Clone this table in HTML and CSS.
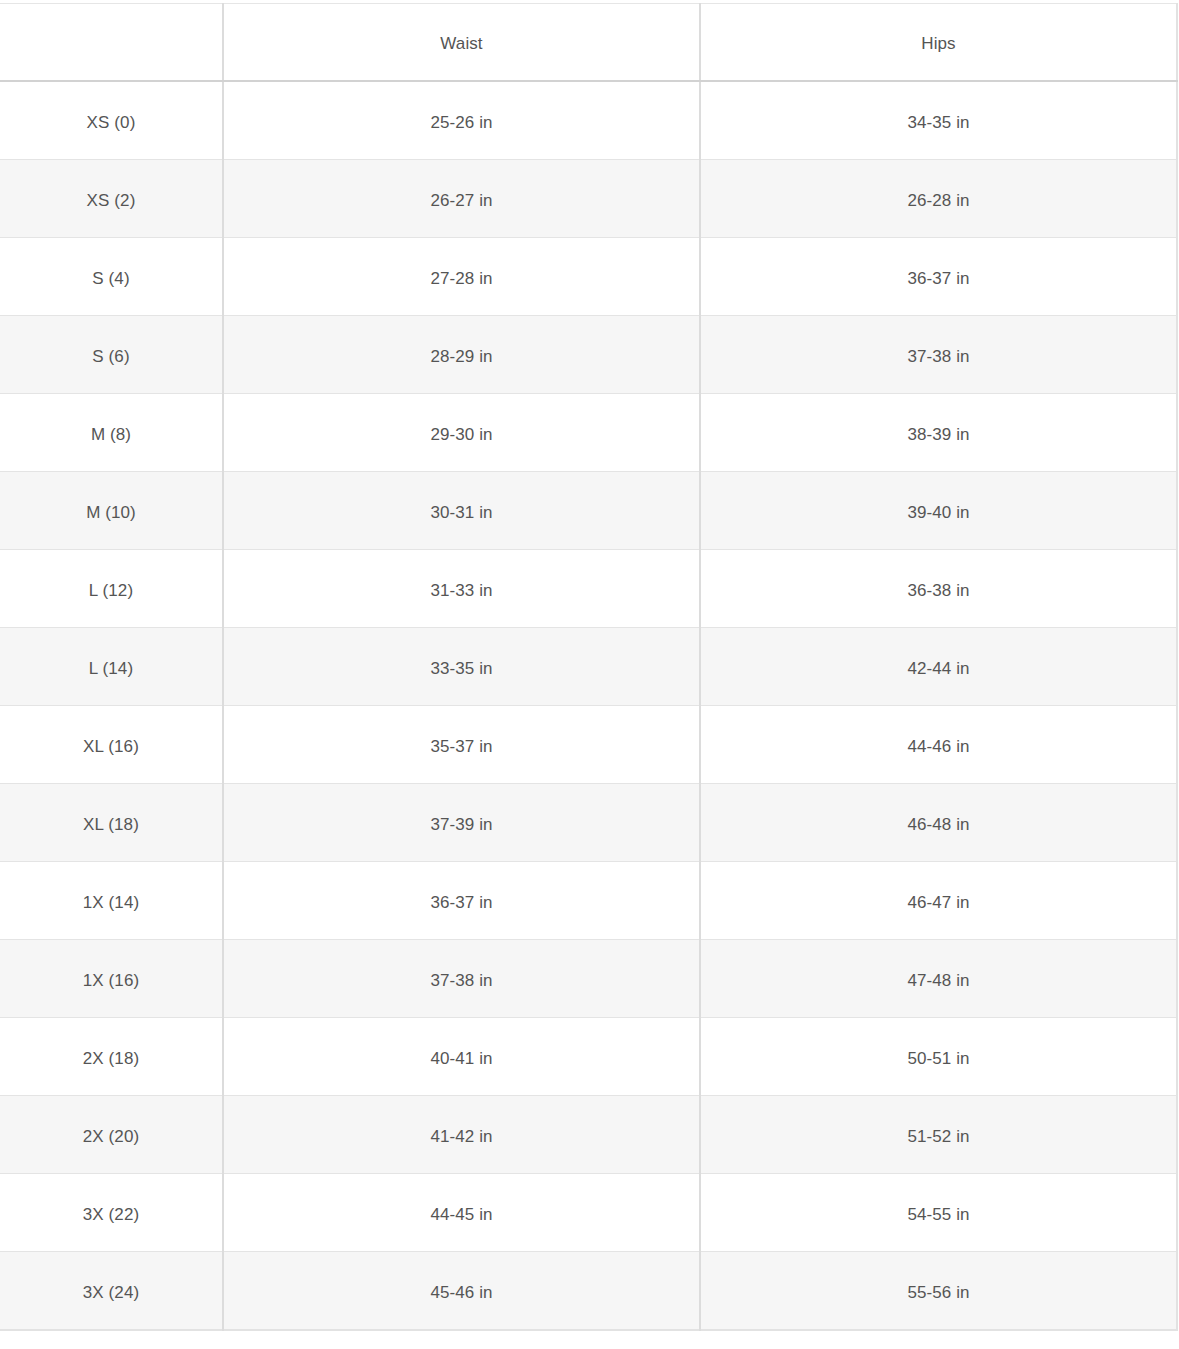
FILE: index.html
```html
<!DOCTYPE html>
<html>
<head>
<meta charset="utf-8">
<link rel="stylesheet" href="styles.css">
</head>
<body>
<table class="size-table">
  <colgroup>
    <col class="c1"><col class="c2"><col class="c3">
  </colgroup>
  <thead>
    <tr><th></th><th>Waist</th><th>Hips</th></tr>
  </thead>
  <tbody>
    <tr><td>XS (0)</td><td>25-26 in</td><td>34-35 in</td></tr>
    <tr><td>XS (2)</td><td>26-27 in</td><td>26-28 in</td></tr>
    <tr><td>S (4)</td><td>27-28 in</td><td>36-37 in</td></tr>
    <tr><td>S (6)</td><td>28-29 in</td><td>37-38 in</td></tr>
    <tr><td>M (8)</td><td>29-30 in</td><td>38-39 in</td></tr>
    <tr><td>M (10)</td><td>30-31 in</td><td>39-40 in</td></tr>
    <tr><td>L (12)</td><td>31-33 in</td><td>36-38 in</td></tr>
    <tr><td>L (14)</td><td>33-35 in</td><td>42-44 in</td></tr>
    <tr><td>XL (16)</td><td>35-37 in</td><td>44-46 in</td></tr>
    <tr><td>XL (18)</td><td>37-39 in</td><td>46-48 in</td></tr>
    <tr><td>1X (14)</td><td>36-37 in</td><td>46-47 in</td></tr>
    <tr><td>1X (16)</td><td>37-38 in</td><td>47-48 in</td></tr>
    <tr><td>2X (18)</td><td>40-41 in</td><td>50-51 in</td></tr>
    <tr><td>2X (20)</td><td>41-42 in</td><td>51-52 in</td></tr>
    <tr><td>3X (22)</td><td>44-45 in</td><td>54-55 in</td></tr>
    <tr><td>3X (24)</td><td>45-46 in</td><td>55-56 in</td></tr>
  </tbody>
</table>
</body>
</html>
```
FILE: styles.css
```css
html, body {
  margin: 0;
  padding: 0;
  background: #ffffff;
}
body {
  padding-top: 3px;
  font-family: "Liberation Sans", Arial, sans-serif;
  color: #555555;
}
.size-table {
  width: 1177px;
  border-collapse: collapse;
  table-layout: fixed;
  border-top: 1px solid #e6e6e6;
  border-right: 2px solid #e2e2e2;
  border-bottom: 2px solid #e2e2e2;
}
.c1 { width: 223px; }
.c2 { width: 477px; }
.c3 { width: 477px; }
.size-table th,
.size-table td {
  padding: 4px 0 0;
  text-align: center;
  vertical-align: middle;
  font-size: 17px;
  font-weight: normal;
  letter-spacing: 0.1px;
}
.size-table th {
  height: 72px;
  border-bottom: 2px solid #d2d2d2;
}
.size-table td {
  height: 73px;
  border-bottom: 1px solid #e4e4e4;
}
.size-table th + th,
.size-table td + td {
  border-left: 2px solid #dcdcdc;
}
.size-table tbody tr:nth-child(even) td {
  background: #f6f6f6;
}
.size-table tbody tr:last-child td {
  border-bottom: 0;
}
```
